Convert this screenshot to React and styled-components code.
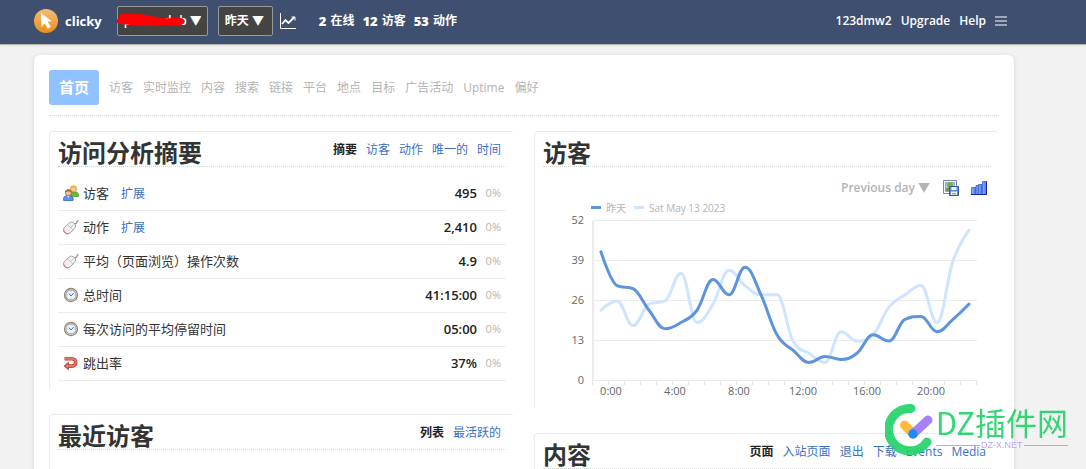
import React from "react";
import styled, { createGlobalStyle } from "styled-components";

const GlobalStyle = createGlobalStyle`
  * {
    box-sizing: border-box;
  }

  html {
    scrollbar-width: none;
  }

  body {
    margin: 0;
    background: #f2f2f2;
    color: #333;
    font-family: "Open Sans", "Noto Sans CJK SC", sans-serif;
    font-size: 12px;
    line-height: 16px;
  }

  a {
    color: #3a6fc8;
    text-decoration: none;
  }

  svg {
    display: block;
    flex-shrink: 0;
  }
`;

const Header = styled.header`
  background: #3e4f6f;
  border-bottom: 1px solid #b4b4b0;
  box-shadow: 0 1px 2px rgba(0, 0, 0, 0.06);
  padding: 0 72px 0 34px;
`;

const HeaderInner = styled.div`
  display: flex;
  align-items: center;
  max-width: 980px;
  height: 44px;
  padding: 0 7px 2px 0;
  color: #fff;
  font-weight: 600;
`;

const Brand = styled.a`
  display: flex;
  align-items: center;
  gap: 7px;
  margin-right: 15px;
  color: #fff;
  font-size: 13px;
  font-weight: 700;
`;

const SelectBox = styled.div`
  position: relative;
  margin-right: ${(props) => props.$gap}px;
`;

const Select = styled.select`
  appearance: none;
  display: block;
  width: ${(props) => props.$width}px;
  height: 30px;
  padding: 0 6px;
  border: 1px solid #999;
  border-radius: 2px;
  background: #444;
  color: #fff;
  font: inherit;
`;

const Scribble = styled.svg`
  position: absolute;
  top: 7px;
  left: 0;
  pointer-events: none;
`;

const IconButton = styled.button`
  display: block;
  padding: 0;
  border: 0;
  background: none;
  color: inherit;
  cursor: pointer;
`;

const Stats = styled.div`
  display: flex;
  flex: 1;
  gap: 8px;
  margin-left: 23px;
  white-space: nowrap;
`;

const Stat = styled.a`
  display: flex;
  gap: 4px;
  color: #fff;

  b {
    font-size: 13px;
  }
`;

const UserMenu = styled.nav`
  display: flex;
  align-items: center;
  gap: 9px;

  a {
    color: #fff;
  }
`;

const Main = styled.main`
  padding: 10px 72px 0 34px;
`;

const Sheet = styled.div`
  max-width: 980px;
  min-height: calc(100vh - 55px);
  padding: 15px;
  border-radius: 6px 6px 0 0;
  background: #fff;
  box-shadow: 0 1px 4px rgba(0, 0, 0, 0.15);
`;

const Nav = styled.nav`
  display: flex;
  align-items: center;
  gap: 10px;
  padding-bottom: 10px;
  border-bottom: 1px dotted #d6d6d6;
  white-space: nowrap;
`;

const NavLink = styled.a`
  color: #b4b4b4;
`;

const NavActive = styled.a`
  padding: 0 10px;
  border-radius: 3px;
  background: #92c1ff;
  color: #fff;
  font-size: 15px;
  font-weight: 700;
  line-height: 35px;
`;

const Columns = styled.div`
  display: grid;
  grid-template-columns: 1fr 1fr;
  gap: 20px;
  margin-top: 15px;
`;

const Column = styled.div`
  display: flex;
  flex-direction: column;
  gap: 24px;
  min-width: 0;
`;

const PanelBox = styled.section`
  min-height: 80px;
  padding: 0 7px 8px 8px;
  border: 1px solid transparent;
  border-top-color: #ebebeb;
  border-left-color: #ebebeb;
  border-radius: 4px;
`;

const PanelHeader = styled.div`
  display: flex;
  align-items: center;
  justify-content: space-between;
  height: 35px;
  padding-right: 5px;
  border-bottom: 1px dotted #d6d6d6;
`;

const PanelTitle = styled.h2`
  align-self: flex-end;
  margin: 0;
  font-size: 24px;
  font-weight: 700;
  line-height: 26px;
`;

const Tabs = styled.div`
  display: flex;
  gap: 9px;
  padding-top: 2px;
  white-space: nowrap;
`;

const Tab = styled.a`
  color: ${(props) => (props.$active ? "#222" : "#3a6fc8")};
  font-weight: ${(props) => (props.$active ? 600 : 400)};
`;

const Table = styled.table`
  width: 100%;
  margin-top: 10px;
  border-spacing: 0;
  font-size: 13px;

  td {
    height: 34px;
    padding: 0 0 2px 5px;
    border-bottom: 1px solid #ebebeb;
  }
`;

const Label = styled.div`
  display: flex;
  align-items: center;
  gap: 4px;

  a {
    margin-left: 8px;
    padding-top: 2px;
    font-size: 12px;
  }
`;

const Value = styled.td`
  color: #222;
  font-weight: 600;
  text-align: right;
`;

const Change = styled.td`
  width: 29px;
  color: #b4b4b4;
  font-size: 11px;
  text-align: right;

  && {
    padding-right: 5px;
  }
`;

const ChartTools = styled.div`
  display: flex;
  align-items: center;
  justify-content: flex-end;
  gap: 12px;
  height: 22px;
  margin-top: 10px;
  padding-right: 4px;
`;

const RangeSelect = styled.select`
  appearance: none;
  padding: 0;
  border: 0;
  background: none;
  color: #b4b4b4;
  font: inherit;
  font-weight: 600;
`;

const Legend = styled.div`
  display: flex;
  align-items: center;
  gap: 8px;
  height: 17px;
  padding-left: 48px;
  color: #b4b4b4;
  font-size: 10px;
`;

const LegendItem = styled.span`
  display: flex;
  align-items: center;
  gap: 5px;

  &::before {
    content: "";
    width: 10px;
    height: 3px;
    background: ${(props) => props.$color};
  }
`;

const ChartSvg = styled.svg`
  width: 100%;
  height: auto;
  overflow: visible;

  text {
    fill: #666;
    font-size: 11px;
  }
`;

const Watermark = styled.div`
  position: fixed;
  right: 18px;
  bottom: 13px;
  display: flex;
  align-items: flex-start;
  opacity: 0.92;
  pointer-events: none;
`;

const WatermarkName = styled.div`
  color: #23d36b;
  font-family: "Noto Sans CJK SC", sans-serif;
  font-size: 31px;
  font-weight: 400;
  line-height: 36px;
`;

const WatermarkSite = styled.div`
  display: flex;
  align-items: center;
  gap: 1px;
  color: #b79cf5;
  font-family: "Liberation Sans", sans-serif;
  font-size: 9px;
  line-height: 10px;

  &::before,
  &::after {
    content: "";
    flex: 1;
    height: 1px;
    background: #b79cf5;
  }
`;

const LogoIcon = () => (
  <svg width="24" height="24" viewBox="0 0 24 24">
    <defs>
      <linearGradient id="logo" x1="0" y1="0" x2="0" y2="1">
        <stop offset="0" stopColor="#f4bd76" />
        <stop offset="1" stopColor="#ee8d16" />
      </linearGradient>
    </defs>
    <circle cx="12" cy="12" r="12" fill="url(#logo)" />
    <path d="M7 4l11 8.2-4.4.6 3.2 5-3 1.9-3.1-5.1L7.500 18z" fill="#fff" />
  </svg>
);

const TrendIcon = () => (
  <svg width="16" height="16" viewBox="0 0 16 16" fill="none" stroke="#fff">
    <path d="M.5 0v15.500H16" />
    <path d="M2 11l3.500-4 3 3L14.500 4" strokeWidth="1.800" />
    <path d="M11.500 4H15v3.500" />
  </svg>
);

const MenuIcon = () => (
  <svg width="12" height="10" viewBox="0 0 12 10" fill="#9da7b7">
    <path d="M0 0h12v2H0zM0 4h12v2H0zM0 8h12v2H0z" />
  </svg>
);

const PeopleIcon = () => (
  <svg width="16" height="16" viewBox="0 0 16 16">
    <path d="M7 11.500V9c0-1.500 1.500-2.200 3.500-2.200S15.500 7.500 15.500 9.500v2z" fill="#6db83f" stroke="#3f8f20" strokeWidth=".7" />
    <circle cx="10.500" cy="4" r="3" fill="#f5c9a0" stroke="#c47d2c" strokeWidth=".6" />
    <path d="M7.200 4C7 1.300 8.500.4 10.500.4s3.600 1 3.300 3.600c-.9-1-2-1.300-3.300-1.300S8.100 3 7.200 4z" fill="#edb432" />
    <path d="M.6 15.500v-2.200c0-1.800 1.700-2.600 4.600-2.600s4.900.8 4.900 2.600v2.200z" fill="#5b93e8" stroke="#2859b3" strokeWidth=".7" />
    <path d="M4 11l1.300 2 1.400-2z" fill="#e8f0ff" />
    <circle cx="5.400" cy="7.800" r="3" fill="#f2c19a" stroke="#87511f" strokeWidth=".6" />
    <path d="M2 8c-.3-2.700 1.200-3.800 3.400-3.800S9.100 5.300 8.800 8C8 6.900 6.900 6.500 5.400 6.500S3 6.900 2 8z" fill="#a96b2d" />
  </svg>
);

const MouseIcon = () => (
  <svg width="16" height="16" viewBox="0 0 16 16">
    <path d="M11 5.500c1-2 1.500.500 2.500-1.500S14 2 15.500 1.500" fill="none" stroke="#888" strokeWidth="1.200" />
    <path d="M1 9l4.800-4.700c2-1.800 4-1.300 5.600.2s1.600 3.300 0 5L7 14c-1.800 1.500-3.800 1.300-5.300-.2C.200 12.200-.1 10.500 1 9z" fill="#f1f1f1" stroke="#999" strokeWidth=".9" />
    <path d="M4.500 5.700l6 5.500M7.800 8.600l2.700-3" fill="none" stroke="#bbb" strokeWidth=".8" />
    <path d="M.7 10.500c0 2.500 2.300 4.400 5 4" fill="none" stroke="#db7d76" strokeWidth="1.100" />
  </svg>
);

const ClockIcon = () => (
  <svg width="16" height="16" viewBox="0 0 16 16">
    <circle cx="8" cy="8" r="6.500" fill="#fff" stroke="#a18450" strokeWidth="1.300" />
    <circle cx="8" cy="8" r="5.200" fill="#edf5ff" stroke="#8fabd4" strokeWidth="1.200" />
    <path d="M6 6.500L8 9l2.700-3" fill="none" stroke="#5d6f88" strokeWidth="1" />
    <path d="M8 3.500v1M8 11.500v1M3.500 8h1M11.500 8h1" stroke="#7f98b9" strokeWidth=".8" />
  </svg>
);

const BounceIcon = () => (
  <svg width="16" height="16" viewBox="0 0 16 16">
    <g fill="none" stroke="#b83a30">
      <path d="M1.500 3.700H9a3.700 3.700 0 0 1 0 7.400H5" strokeWidth="3.600" />
      <path d="M5.500 7v8L1 11z" fill="#b83a30" strokeWidth=".5" />
    </g>
    <g fill="none" stroke="#e57468">
      <path d="M2 3.700H9a3.700 3.700 0 0 1 0 7.400H4.500" strokeWidth="2.200" />
      <path d="M5 8.500v5L2.200 11z" fill="#e57468" stroke="none" />
    </g>
  </svg>
);

const SaveImageIcon = () => (
  <svg width="16" height="16" viewBox="0 0 16 16">
    <path d="M.5.5h13v13H.5z" fill="#f7faff" stroke="#7088b3" />
    <path d="M2.500 2.500h9v9h-9z" fill="#a9c8e8" stroke="#8192ac" strokeWidth=".7" />
    <path d="M3 8h8v3.200H3z" fill="#6e9457" />
    <circle cx="7" cy="5" r="3" fill="#79b13f" />
    <path d="M6.500 7h1v3h-1z" fill="#765b36" />
    <path d="M6.500 6.500h9v9h-9z" fill="#598be5" stroke="#3158aa" />
    <path d="M8.500 7h5v3h-5z" fill="#fff" />
    <path d="M8 11.500h6V15H8z" fill="#eef4e8" />
    <path d="M9 13h4v1.500H9z" fill="#86c451" />
  </svg>
);

const BarsIcon = () => (
  <svg width="16" height="14" viewBox="0 0 16 14">
    <defs>
      <linearGradient id="bars" x1="0" y1="0" x2="1" y2="0">
        <stop offset="0" stopColor="#8fb6f7" />
        <stop offset="1" stopColor="#3f6fe6" />
      </linearGradient>
    </defs>
    <g fill="url(#bars)" stroke="#3a63cf" strokeWidth=".8">
      <path d="M.5 6.500h4.500v7H.5z" />
      <path d="M5 4.500h3v9H5z" />
      <path d="M7.500 3.500H11v10H7.500z" />
      <path d="M11.500.5h4v13h-4z" />
    </g>
    <path d="M15.500.5v13H0" fill="none" stroke="#1a27b8" />
  </svg>
);

const WatermarkLogo = () => (
  <svg width="51" height="52" viewBox="0 0 51 52" fill="none" strokeLinecap="round">
    <path d="M26 4.500A21.200 21.200 0 1 0 42 38" stroke="#23d36b" strokeWidth="9" />
    <path d="M19.500 21l8.500 8.500" stroke="#ffb52e" strokeWidth="9" />
    <path d="M43 16L28.500 29.500" stroke="#9d78fb" strokeWidth="9" />
    <circle cx="28" cy="30" r="4.700" fill="#0c80ff" />
  </svg>
);

const navItems = ["访客", "实时监控", "内容", "搜索", "链接", "平台", "地点", "目标", "广告活动", "Uptime", "偏好"];

const summary = [
  { icon: PeopleIcon, label: "访客", value: "495", expand: true },
  { icon: MouseIcon, label: "动作", value: "2,410", expand: true },
  { icon: MouseIcon, label: "平均（页面浏览）操作次数", value: "4.9" },
  { icon: ClockIcon, label: "总时间", value: "41:15:00" },
  { icon: ClockIcon, label: "每次访问的平均停留时间", value: "05:00" },
  { icon: BounceIcon, label: "跳出率", value: "37%" },
];

const yesterday = [42, 31, 30, 23, 17, 19, 23, 33, 28, 37, 28, 15, 10, 6, 8, 7, 9, 15, 13, 20, 21, 16, 20, 25];
const previous = [23, 26, 18, 25, 26, 35, 19, 25, 36, 31, 28, 28, 13, 9, 6, 16, 13, 15, 24, 28, 31, 19, 39, 49];

const PLOT = { left: 50, top: 5, width: 384, height: 160, max: 52 };
const STEP = PLOT.width / 24;

const toY = (value) => PLOT.top + PLOT.height * (1 - value / PLOT.max);

// smooth line that never overshoots its neighbouring points
function spline(values) {
  const pts = values.map((v, i) => ({ x: PLOT.left + STEP * (i + 0.5), y: toY(v) }));
  let d = `M${pts[0].x} ${pts[0].y}`;
  let out = pts[0];

  for (let i = 1; i < pts.length; i++) {
    const prev = pts[i - 1];
    const cur = pts[i];
    const next = pts[i + 1];
    let left = cur;
    let right = cur;

    if (next) {
      const slope = (next.y - prev.y) / (next.x - prev.x);
      const dx = STEP / 2.5;
      let ly = cur.y - slope * dx;
      let ry = cur.y + slope * dx;

      if (ly > Math.max(prev.y, cur.y) || ly < Math.min(prev.y, cur.y)) {
        ly = ly > cur.y ? Math.max(prev.y, cur.y) : Math.min(prev.y, cur.y);
        ry = 2 * cur.y - ly;
      }
      if (ry > Math.max(next.y, cur.y) || ry < Math.min(next.y, cur.y)) {
        ry = ry > cur.y ? Math.max(next.y, cur.y) : Math.min(next.y, cur.y);
        ly = 2 * cur.y - ry;
      }
      left = { x: cur.x - dx, y: ly };
      right = { x: cur.x + dx, y: ry };
    }

    d += `C${out.x} ${out.y} ${left.x} ${left.y} ${cur.x} ${cur.y}`;
    out = right;
  }
  return d;
}

function Chart() {
  const right = PLOT.left + PLOT.width;
  const bottom = PLOT.top + PLOT.height;

  return (
    <ChartSvg viewBox="0 0 448 184" role="img" aria-label="访客">
      {[52, 39, 26, 13, 0].map((v) => (
        <g key={v}>
          <path d={`M${PLOT.left} ${toY(v) - 0.5}H${right}`} stroke="#ebebeb" />
          <text x="41" y={toY(v) + 3} textAnchor="end">
            {v}
          </text>
        </g>
      ))}
      <path d={`M${PLOT.left} ${PLOT.top}V${bottom}`} stroke="#ebebeb" strokeWidth="2" />
      {Array.from({ length: 25 }, (_, i) => (
        <path key={i} d={`M${PLOT.left + i * STEP - 0.5} ${bottom}v4`} stroke="#e4e4e4" />
      ))}
      {[0, 4, 8, 12, 16, 20].map((hour) => (
        <text key={hour} x={PLOT.left + STEP * (hour + 0.5) + 10} y={bottom + 14} textAnchor="middle">
          {hour}:00
        </text>
      ))}
      <g fill="none" strokeWidth="3" strokeLinecap="round" strokeLinejoin="round">
        <path d={spline(previous)} stroke="#cfe4ff" />
        <path d={spline(yesterday)} stroke="#5e94dd" />
      </g>
    </ChartSvg>
  );
}

function Panel({ title, tabs = [], children }) {
  return (
    <PanelBox>
      <PanelHeader>
        <PanelTitle>{title}</PanelTitle>
        <Tabs>
          {tabs.map((tab, i) => (
            <Tab key={tab} href="#" $active={i === 0}>
              {tab}
            </Tab>
          ))}
        </Tabs>
      </PanelHeader>
      {children}
    </PanelBox>
  );
}

export default function App() {
  return (
    <>
      <GlobalStyle />
      <Header>
        <HeaderInner>
          <Brand href="#">
            <LogoIcon />
            clicky
          </Brand>
          <SelectBox $gap={10}>
            <Select $width={91} aria-label="Site">
              <option>p..........dub ▼</option>
            </Select>
            <Scribble width="70" height="16" viewBox="0 0 70 16">
              <path
                d="M2 2C8-1 15 2 22 1c8 1 15 2 22 4 8 1 14-1 19 0 4 0 5 4 3 6-5 3-12 2-18 1-8 1-16 1-24 1-7-1-14-1-20-2-4 1-6-3-3-5z"
                fill="#f00"
              />
            </Scribble>
          </SelectBox>
          <SelectBox $gap={7}>
            <Select $width={55} aria-label="Date">
              <option>昨天 ▼</option>
            </Select>
          </SelectBox>
          <IconButton aria-label="Trends">
            <TrendIcon />
          </IconButton>
          <Stats>
            <Stat href="#">
              <b>2</b> 在线
            </Stat>
            <Stat href="#">
              <b>12</b> 访客
            </Stat>
            <Stat href="#">
              <b>53</b> 动作
            </Stat>
          </Stats>
          <UserMenu>
            <a href="#">123dmw2</a>
            <a href="#">Upgrade</a>
            <a href="#">Help</a>
            <IconButton aria-label="Menu">
              <MenuIcon />
            </IconButton>
          </UserMenu>
        </HeaderInner>
      </Header>

      <Main>
        <Sheet>
          <Nav>
            <NavActive href="#">首页</NavActive>
            {navItems.map((item) => (
              <NavLink key={item} href="#">
                {item}
              </NavLink>
            ))}
          </Nav>

          <Columns>
            <Column>
              <Panel title="访问分析摘要" tabs={["摘要", "访客", "动作", "唯一的", "时间"]}>
                <Table>
                  <tbody>
                    {summary.map(({ icon: Icon, label, value, expand }) => (
                      <tr key={label}>
                        <td>
                          <Label>
                            <Icon />
                            {label}
                            {expand && <a href="#">扩展</a>}
                          </Label>
                        </td>
                        <Value>{value}</Value>
                        <Change>0%</Change>
                      </tr>
                    ))}
                  </tbody>
                </Table>
              </Panel>
              <Panel title="最近访客" tabs={["列表", "最活跃的"]} />
            </Column>

            <Column>
              <Panel title="访客">
                <ChartTools>
                  <RangeSelect aria-label="Compare">
                    <option>Previous day ▼</option>
                  </RangeSelect>
                  <IconButton aria-label="Save image">
                    <SaveImageIcon />
                  </IconButton>
                  <IconButton aria-label="Bar chart">
                    <BarsIcon />
                  </IconButton>
                </ChartTools>
                <Legend>
                  <LegendItem $color="#5e94dd">昨天</LegendItem>
                  <LegendItem $color="#cfe4ff">Sat May 13 2023</LegendItem>
                </Legend>
                <Chart />
              </Panel>
              <Panel title="内容" tabs={["页面", "入站页面", "退出", "下载", "Events", "Media"]} />
            </Column>
          </Columns>
        </Sheet>
      </Main>

      <Watermark>
        <WatermarkLogo />
        <div>
          <WatermarkName>DZ插件网</WatermarkName>
          <WatermarkSite>DZ-X.NET</WatermarkSite>
        </div>
      </Watermark>
    </>
  );
}
